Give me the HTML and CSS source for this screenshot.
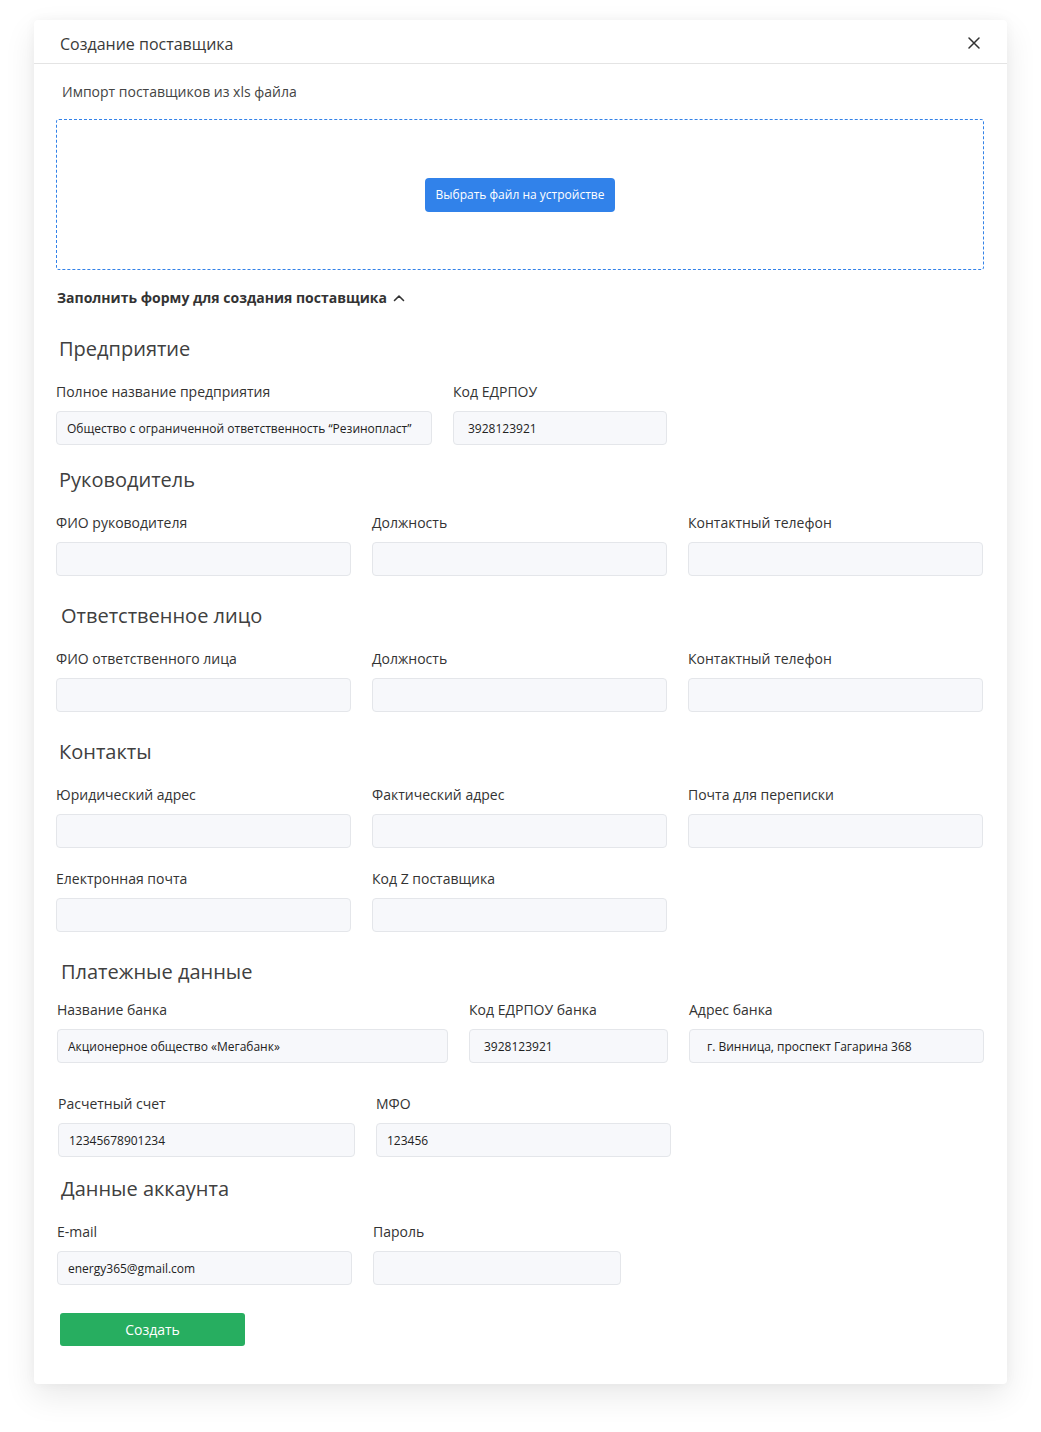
FILE: index.html
```html
<!DOCTYPE html>
<html lang="ru">
<head>
    <meta charset="UTF-8">
    <meta name="viewport" content="width=device-width, initial-scale=1.0">
    <title>Создание поставщика</title>
    <link rel="stylesheet" href="styles.css">
</head>
<body>
    <div class="modal">
        <div class="modal-header">
            <span class="modal-title">Создание поставщика</span>
            <button class="close-btn" type="button" aria-label="Закрыть">
                <svg width="12" height="12" viewBox="0 0 12 12"><path d="M1 1L11 11M11 1L1 11" stroke="#333" stroke-width="1.5" stroke-linecap="round"/></svg>
            </button>
        </div>

        <div class="modal-body">
            <div class="import-title">Импорт поставщиков из xls файла</div>
            <div class="dropzone">
                <button class="btn-upload" type="button">Выбрать файл на устройстве</button>
            </div>

            <div class="toggle">
                Заполнить форму для создания поставщика
                <svg width="12" height="8" viewBox="0 0 12 8"><path d="M1.5 6.5L6 2L10.5 6.5" fill="none" stroke="#333" stroke-width="1.6" stroke-linecap="round" stroke-linejoin="round"/></svg>
            </div>

            <div class="section section--first">
                <h2>Предприятие</h2>
                <div class="row">
                    <div class="field field--xl">
                        <label>Полное название предприятия</label>
                        <input type="text" value="Общество с ограниченной ответственность “Резинопласт”">
                    </div>
                    <div class="field field--sm">
                        <label>Код ЕДРПОУ</label>
                        <input type="text" class="pad-14" value="3928123921">
                    </div>
                </div>
            </div>

            <div class="section section--close">
                <h2>Руководитель</h2>
                <div class="row">
                    <div class="field"><label>ФИО руководителя</label><input type="text"></div>
                    <div class="field"><label>Должность</label><input type="text"></div>
                    <div class="field"><label>Контактный телефон</label><input type="text"></div>
                </div>
            </div>

            <div class="section section--indent">
                <h2>Ответственное лицо</h2>
                <div class="row">
                    <div class="field"><label>ФИО ответственного лица</label><input type="text"></div>
                    <div class="field"><label>Должность</label><input type="text"></div>
                    <div class="field"><label>Контактный телефон</label><input type="text"></div>
                </div>
            </div>

            <div class="section">
                <h2>Контакты</h2>
                <div class="row">
                    <div class="field"><label>Юридический адрес</label><input type="text"></div>
                    <div class="field"><label>Фактический адрес</label><input type="text"></div>
                    <div class="field"><label>Почта для переписки</label><input type="text"></div>
                </div>
                <div class="row">
                    <div class="field"><label>Електронная почта</label><input type="text"></div>
                    <div class="field"><label>Код Z поставщика</label><input type="text"></div>
                </div>
            </div>

            <div class="section section--payment section--indent">
                <h2>Платежные данные</h2>
                <div class="row shift-1">
                    <div class="field field--bank">
                        <label>Название банка</label>
                        <input type="text" value="Акционерное общество «Мегабанк»">
                    </div>
                    <div class="field field--code">
                        <label>Код ЕДРПОУ банка</label>
                        <input type="text" class="pad-14" value="3928123921">
                    </div>
                    <div class="field">
                        <label>Адрес банка</label>
                        <input type="text" class="pad-17" value="г. Винница, проспект Гагарина 368">
                    </div>
                </div>
                <div class="row shift-2">
                    <div class="field field--account">
                        <label>Расчетный счет</label>
                        <input type="text" value="12345678901234">
                    </div>
                    <div class="field">
                        <label>МФО</label>
                        <input type="text" value="123456">
                    </div>
                </div>
            </div>

            <div class="section section--account section--indent">
                <h2>Данные аккаунта</h2>
                <div class="row shift-1">
                    <div class="field">
                        <label>E-mail</label>
                        <input type="text" value="energy365@gmail.com">
                    </div>
                    <div class="field field--pass">
                        <label>Пароль</label>
                        <input type="password">
                    </div>
                </div>
            </div>

            <button class="btn-create" type="button">Создать</button>
        </div>
    </div>
</body>
</html>
```

FILE: styles.css
```css
body {
    margin: 0;
    padding: 20px 34px 48px;
    background: #fff;
    font-family: "Open Sans", "Noto Sans", Arial, sans-serif;
    color: #333;
}
.modal {
    width: 973px;
    background: #fff;
    border-radius: 4px;
    box-shadow: 0 12px 32px rgba(0, 0, 0, 0.09), 0 0 12px rgba(0, 0, 0, 0.04);
}
.modal-header {
    display: flex;
    align-items: center;
    justify-content: space-between;
    padding: 14px 26px 9px;
    border-bottom: 1px solid #e4e4e4;
}
.modal-title {
    font-size: 16px;
    line-height: 20px;
    color: #3a3a3a;
}
.close-btn {
    display: flex;
    padding: 0;
    margin-right: 1px;
    margin-top: -2px;
    border: none;
    background: none;
    cursor: pointer;
}
.modal-body {
    padding: 18px 23px 38px 22px;
}
.import-title {
    padding-left: 6px;
    font-size: 14px;
    line-height: 20px;
    color: #444;
}
.dropzone {
    display: flex;
    align-items: center;
    justify-content: center;
    height: 149px;
    margin-top: 17px;
    border: 1px dashed #3382e8;
    border-radius: 3px;
}
.btn-upload {
    height: 34px;
    padding: 0 11px;
    background: #3182ea;
    color: #fff;
    border: none;
    border-radius: 4px;
    font-family: inherit;
    font-size: 12px;
    cursor: pointer;
}
.toggle {
    display: flex;
    align-items: center;
    gap: 6px;
    margin-top: 18px;
    padding-left: 1px;
    font-size: 14px;
    line-height: 20px;
    font-weight: 700;
    color: #333;
}
.section {
    margin-top: 26px;
}
.section--first {
    margin-top: 27px;
}
.section--close {
    margin-top: 21px;
}
.section--account {
    margin-top: 18px;
}
.section h2 {
    margin: 0 0 19px;
    padding-left: 3px;
    font-size: 20px;
    line-height: 28px;
    font-weight: 400;
    color: #404040;
}
.section--indent h2 {
    padding-left: 5px;
}
.section--payment h2 {
    margin-bottom: 14px;
}
.row {
    display: flex;
    gap: 21px;
}
.row + .row {
    margin-top: 21px;
}
.section--payment .row + .row {
    margin-top: 31px;
}
.shift-1 {
    padding-left: 1px;
}
.shift-2 {
    padding-left: 2px;
}
.field {
    display: flex;
    flex-direction: column;
    gap: 9px;
    width: 295px;
}
.field--xl { width: 376px; }
.field--sm { width: 214px; }
.field--bank { width: 391px; }
.field--code { width: 199px; }
.field--account { width: 297px; }
.field--pass { width: 248px; }
.field label {
    font-size: 14px;
    line-height: 20px;
    color: #333;
}
.field input {
    box-sizing: border-box;
    width: 100%;
    height: 34px;
    padding: 0 10px;
    background: #f7f8fb;
    border: 1px solid #e4e6ea;
    border-radius: 4px;
    font-family: inherit;
    font-size: 12px;
    color: #222;
    outline: none;
}
.field input.pad-14 { padding-left: 14px; }
.field input.pad-17 { padding-left: 17px; }
.btn-create {
    width: 185px;
    height: 33px;
    margin-top: 28px;
    margin-left: 4px;
    background: #27ae60;
    color: #fff;
    border: none;
    border-radius: 3px;
    font-family: inherit;
    font-size: 14px;
    cursor: pointer;
}
```
